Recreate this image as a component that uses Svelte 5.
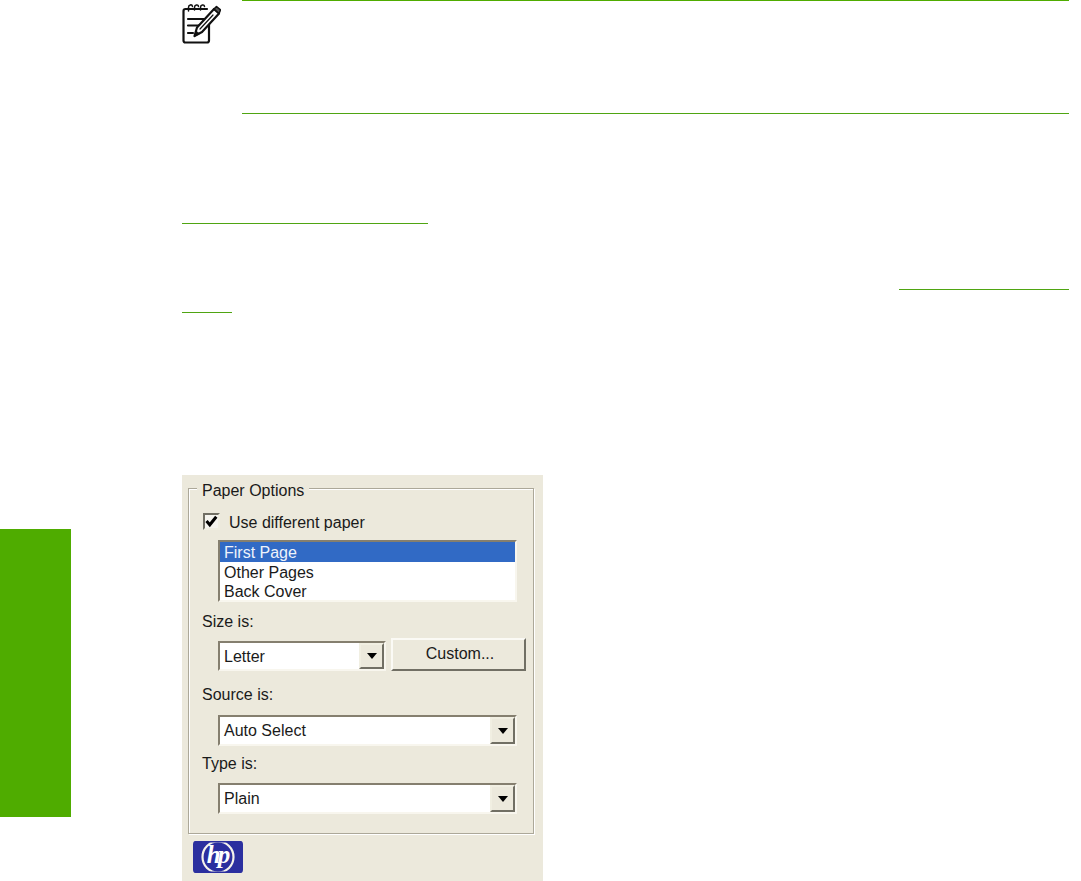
<script>
  const rows = ['First Page', 'Other Pages', 'Back Cover'];
</script>

<div class="page">
  <aside class="tab"></aside>
  <main class="content">
    <section class="note">
      <svg class="note-icon" viewBox="0 0 40 44" width="40" height="44" fill="none" stroke="#111" stroke-width="2.2" stroke-linecap="round" stroke-linejoin="round">
        <path d="M26 9H4.500q-2 0-2 2v29.500q0 2 2 2H26q2 0 2-2V24" />
        <path d="M7.500 11V7.500c0-3 3.500-3.500 4-1M13.500 10V7.500c0-3 3.500-3.500 4-1M19.500 10V7.500c0-3 3.500-3.500 4-1" stroke-width="1.500" />
        <path d="M7 19h16M7 25.500h12M7 33h5" stroke-width="2.200" />
        <path d="M13.500 36l2.500-8.500L33 9l5 4.500-17 18.500z" fill="#fff" />
        <path d="M33 9l2.500-2.500 4 3.500-1.500 3.500z" fill="#555" stroke-width="1.600" />
        <path d="M13.500 36l1.500-5 3 2.500z" fill="#111" stroke-width="1" />
        <path d="M19 29l13-14" stroke-width="1.200" />
      </svg>
      <div class="note-rule"></div>
    </section>

    <div class="link-line first"></div>
    <div class="link-line second"></div>
    <div class="link-line third"></div>

    <section class="panel">
      <div class="group">
        <span class="legend">Paper Options</span>
        <label class="check-row">
          <span class="check">
            <svg viewBox="0 0 13 13" width="13" height="13"><path d="M1.500 6l3.300 3.800 6.500-8" fill="none" stroke="#000" stroke-width="3" /></svg>
          </span>
          <span class="check-text">Use different paper</span>
        </label>
        <div class="listbox">
          {#each rows as row, i}
            <div class="row" class:selected={i === 0}>{row}</div>
          {/each}
        </div>
        <div class="label size-label">Size is:</div>
        <div class="size-row">
          <div class="combo small"><span class="value">Letter</span><span class="arrow"><i></i></span></div>
          <div class="button">Custom...</div>
        </div>
        <div class="label source-label">Source is:</div>
        <div class="combo source"><span>Auto Select</span><span class="arrow"><i></i></span></div>
        <div class="label type-label">Type is:</div>
        <div class="combo type"><span>Plain</span><span class="arrow"><i></i></span></div>
      </div>
      <div class="logo">
        <svg viewBox="0 0 50 32" width="50" height="32">
          <rect width="50" height="32" rx="3" fill="#2b2f9f" />
          <circle cx="25" cy="16" r="15.500" fill="none" stroke="#f4f2ea" stroke-width="2.200" />
          <rect x="0" y="0" width="50" height="1.500" fill="#2b2f9f" />
          <rect x="0" y="30.500" width="50" height="1.500" fill="#2b2f9f" />
          <text x="24" y="21.500" text-anchor="middle" class="hp">hp</text>
        </svg>
      </div>
    </section>
  </main>
</div>

<style>
  :global(body) { margin: 0; background: #fff; }
  .page { display: flex; width: 1081px; height: 881px; overflow: hidden; }
  .tab { flex: none; width: 71px; height: 288px; margin-top: 529px; background: #4fac00; }
  .content { flex: none; width: 887px; margin-left: 111px; display: flex; flex-direction: column; align-items: flex-start; }

  .note { display: flex; width: 887px; height: 114px; }
  .note-icon { flex: none; margin: 0 0 0 -1px; width: 40px; height: 44px; }
  .note-rule { flex: 1; margin-left: 21px; height: 112px; border-top: 2px solid #4fac00; border-bottom: 1px solid #4fa512; box-sizing: content-box; margin-top: -1px; }

  .link-line { height: 1px; background: #4fa512; }
  .first { width: 246px; margin-top: 109px; }
  .second { width: 170px; margin-top: 65px; align-self: flex-end; }
  .third { width: 50px; margin-top: 22px; }

  .panel { width: 361px; height: 406px; margin-top: 162px; background: #ece9dc; padding: 13px 0 0 6px; box-sizing: border-box; font: 16px/20px "Liberation Sans", Arial, sans-serif; color: #1a1a1a; }
  .group { position: relative; width: 346px; height: 346px; box-sizing: border-box; border: 1px solid #aca899; box-shadow: 1px 1px 0 #fff, inset 1px 1px 0 #fff; padding: 0 0 0 29px; }
  .legend { position: absolute; left: 8px; top: -7px; padding: 0 5px; line-height: 18px; background: #ece9dc; }

  .check-row { display: flex; align-items: center; gap: 9px; margin: 24px 0 0 -15px; height: 17px; }
  .check-text { padding-top: 2px; }
  .check { box-sizing: border-box; width: 17px; height: 17px; background: #f6f5ef; border: 2px solid; border-color: #716f64 #f1efe2 #f1efe2 #716f64; display: flex; align-items: center; justify-content: center; }

  .listbox { box-sizing: border-box; width: 299px; height: 62px; margin-top: 10px; background: #fff; border: 2px solid; border-color: #857f6f #f8f6ee #f8f6ee #857f6f; }
  .row { height: 19.500px; padding-left: 4px; line-height: 21px; }
  .selected { background: #316ac5; color: #eef3fb; }

  .label { margin-left: -16px; line-height: 20px; }
  .size-label { margin-top: 10px; }
  .source-label { margin-top: 14px; }
  .type-label { margin-top: 8px; }

  .size-row { display: flex; align-items: flex-end; gap: 5px; height: 33px; margin-top: 6px; }
  .combo { box-sizing: border-box; width: 299px; height: 31px; background: #fff; border: 2px solid; border-color: #857f6f #f8f6ee #f8f6ee #857f6f; display: flex; align-items: center; justify-content: space-between; padding-left: 4px; }
  .combo.small { width: 168px; height: 30px; }
  .value { padding-top: 2px; }
  .combo.source { margin-top: 10px; }
  .combo.type { margin-top: 9px; }
  .arrow { box-sizing: border-box; width: 25px; height: 100%; background: #ece9dc; border: 2px solid; border-color: #f1efe2 #716f64 #716f64 #f1efe2; display: flex; align-items: center; justify-content: center; }
  .arrow i { width: 0; height: 0; border: 5px solid transparent; border-top: 6px solid #000; border-bottom: 0; }

  .button { box-sizing: border-box; width: 135px; height: 33px; padding: 0 0 2px 3px; background: #ece9dc; border: 2px solid; border-color: #fbfaf5 #716f64 #716f64 #fbfaf5; display: flex; align-items: center; justify-content: center; }

  .logo { margin: 7px 0 0 5px; width: 50px; height: 32px; border-radius: 3px; overflow: hidden; }
  .logo svg { display: block; }
  .hp { font: italic bold 25px "Liberation Serif", serif; letter-spacing: -3px; fill: #fff; }
</style>
